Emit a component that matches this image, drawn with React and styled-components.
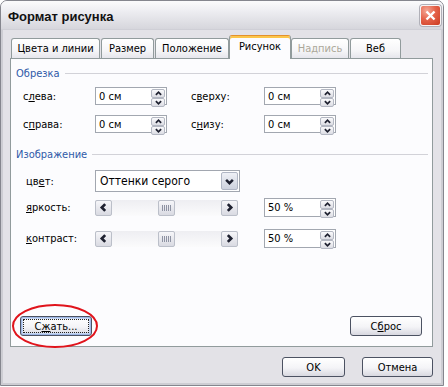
import React from "react";
import styled, { createGlobalStyle, css } from "styled-components";

const GlobalStyle = createGlobalStyle`
  html, body {
    margin: 0;
    padding: 0;
    background: #ffffff;
  }
  body {
    font-family: "DejaVu Sans Condensed", "Liberation Sans", sans-serif;
    font-size: 11px;
    color: #000;
  }
`;

function Chevron({ dir = "up", size = 7, weight = 1.8 }) {
    const pts = {
        up: "1,5.5 4,2.5 7,5.5",
        down: "1,2.5 4,5.5 7,2.5",
        left: "5.5,1 2.5,4 5.5,7",
        right: "2.5,1 5.5,4 2.5,7",
    }[dir];
    return (
        <svg width={size} height={size} viewBox="0 0 8 8">
            <polyline points={pts} fill="none" stroke="#1e2130" strokeWidth={weight} />
        </svg>
    );
}

function SpinControl({ value }) {
    return (
        <SpinBox>
            <SpinText>{value}</SpinText>
            <SpinButtons>
                <SpinButton>
                    <Chevron dir="up" size={7} weight={2} />
                </SpinButton>
                <SpinButton>
                    <Chevron dir="down" size={7} weight={2} />
                </SpinButton>
            </SpinButtons>
        </SpinBox>
    );
}

function ScrollBar() {
    return (
        <Scroll>
            <ScrollPart>
                <Chevron dir="left" size={9} weight={2.4} />
            </ScrollPart>
            <Track>
                <ScrollPart>
                    <Grip>
                        <i />
                        <i />
                        <i />
                        <i />
                        <i />
                    </Grip>
                </ScrollPart>
            </Track>
            <ScrollPart>
                <Chevron dir="right" size={9} weight={2.4} />
            </ScrollPart>
        </Scroll>
    );
}

function App() {
    return (
        <>
            <GlobalStyle />
            <Window>
                <TitleBar>
                    <Title>Формат рисунка</Title>
                    <CloseButton>
                        <svg width="11" height="11" viewBox="0 0 11 11">
                            <path d="M1.5 1.5 L9.5 9.5 M9.5 1.5 L1.5 9.5" stroke="#fff" strokeWidth="2.4" />
                        </svg>
                    </CloseButton>
                </TitleBar>
                <Body>
                    <TabStrip>
                        <Tab $w={89} $mr={1}>Цвета и линии</Tab>
                        <Tab $w={53} $mr={1}>Размер</Tab>
                        <Tab $w={74}>Положение</Tab>
                        <Tab $w={62} $active>Рисунок</Tab>
                        <Tab $w={58} $mr={1} $disabled>Надпись</Tab>
                        <Tab $w={51}>Веб</Tab>
                    </TabStrip>
                    <Panel>
                        <GroupHeader $top={7}>
                            <GroupLabel>Обрезка</GroupLabel>
                            <GroupLine />
                        </GroupHeader>
                        <Row $top={7} $h={18}>
                            <Label>с<u>л</u>ева:</Label>
                            <SpinControl value="0 см" />
                            <Label $gap={24} $w={73}>с<u>в</u>ерху:</Label>
                            <SpinControl value="0 см" />
                        </Row>
                        <Row $top={10} $h={18}>
                            <Label>с<u>п</u>рава:</Label>
                            <SpinControl value="0 см" />
                            <Label $gap={24} $w={73}>с<u>н</u>изу:</Label>
                            <SpinControl value="0 см" />
                        </Row>

                        <GroupHeader $top={14}>
                            <GroupLabel>Изображение</GroupLabel>
                            <GroupLine />
                        </GroupHeader>
                        <Row $top={9} $h={22}>
                            <Label $indent={3}>цв<u>е</u>т:</Label>
                            <Select>
                                <SelectText>Оттенки серого</SelectText>
                                <DropButton>
                                    <Chevron dir="down" size={9} weight={2.2} />
                                </DropButton>
                            </Select>
                        </Row>
                        <Row $top={6} $h={19}>
                            <Label $indent={3}><u>я</u>ркость:</Label>
                            <ScrollBar />
                            <Spacer $w={26} />
                            <SpinControl value="50 %" />
                        </Row>
                        <Row $top={12} $h={19}>
                            <Label $indent={3}><u>к</u>онтраст:</Label>
                            <ScrollBar />
                            <Spacer $w={26} />
                            <SpinControl value="50 %" />
                        </Row>

                        <PanelButtons>
                            <Button $w={72} $focus>
                                С<u>ж</u>ать...
                            </Button>
                            <Button $w={72}>
                                С<u>б</u>рос
                            </Button>
                        </PanelButtons>
                    </Panel>
                    <Footer>
                        <Button $w={63}>OK</Button>
                        <Button $w={71}>Отмена</Button>
                    </Footer>
                </Body>
                <Highlight width="92" height="48" viewBox="0 0 92 48">
                    <ellipse cx="44" cy="23" rx="42" ry="21" fill="none" stroke="#e0141c" strokeWidth="2" />
                </Highlight>
            </Window>
        </>
    );
}

// Styled Components

const Window = styled.div`
  position: relative;
  width: 444px;
  height: 386px;
  box-sizing: border-box;
  border: 1px solid #85868e;
  border-radius: 7px 7px 0 0;
  background: #e3e2e7;
  display: flex;
  flex-direction: column;
  overflow: hidden;
`;

const TitleBar = styled.div`
  height: 28px;
  flex: none;
  display: flex;
  align-items: center;
  justify-content: space-between;
  padding: 0 2px 0 7px;
  background: linear-gradient(#fbfbfc 0%, #eeeef2 35%, #e1e1e6 70%, #d6d6dc 100%);
  border-bottom: 1px solid #cfcfd6;
`;

const Title = styled.div`
  font-family: "Liberation Sans", "DejaVu Sans", sans-serif;
  font-weight: bold;
  font-size: 13px;
  color: #111;
  padding-top: 2px;
`;

const CloseButton = styled.div`
  width: 21px;
  height: 21px;
  box-sizing: border-box;
  border: 1px solid #f7f3f3;
  border-radius: 3px;
  box-shadow: 0 0 0 1px #b0b0b8;
  background: radial-gradient(circle at 30% 25%, #f4a896 0%, #e5634a 45%, #cb3a20 100%);
  display: flex;
  align-items: center;
  justify-content: center;
  margin-top: 1px;
`;

const Body = styled.div`
  flex: 1;
  display: flex;
  flex-direction: column;
  padding: 5px 10px 0 9px;
  box-shadow: inset 2px 0 0 #cdcdd3, inset -2px 0 0 #cdcdd3, inset 0 -2px 0 #cdcdd3;
`;

const TabStrip = styled.div`
  height: 23px;
  display: flex;
  align-items: flex-end;
  padding-left: 1px;
`;

const Tab = styled.div`
  width: ${(p) => p.$w}px;
  margin-right: ${(p) => p.$mr || 0}px;
  height: 20px;
  box-sizing: border-box;
  border: 1px solid #919b9c;
  border-bottom: none;
  border-radius: 3px 3px 0 0;
  background: linear-gradient(#ffffff 0%, #f6f6f8 60%, #e6e6ec 100%);
  color: ${(p) => (p.$disabled ? "#aca899" : "#000")};
  display: flex;
  justify-content: center;
  padding-top: 3px;
  ${(p) =>
        p.$active &&
        css`
      position: relative;
      z-index: 1;
      height: 24px;
      margin-bottom: -1px;
      padding-top: 4px;
      background: #fcfcfe;
      border-top: 1px solid #e3912d;
      box-shadow: inset 0 2px 0 #fcc64a;
    `}
`;

const Panel = styled.div`
  height: 289px;
  box-sizing: border-box;
  border: 1px solid #919b9c;
  background: #fcfcfe;
  display: flex;
  flex-direction: column;
  padding-bottom: 10px;
`;

const GroupHeader = styled.div`
  height: 14px;
  margin-top: ${(p) => p.$top}px;
  display: flex;
  align-items: center;
  padding: 0 4px 0 5px;
`;

const GroupLabel = styled.span`
  color: #2f5aa8;
`;

const GroupLine = styled.div`
  flex: 1;
  height: 1px;
  margin-left: 5px;
  background: #d2d2d8;
`;

const Row = styled.div`
  height: ${(p) => p.$h}px;
  margin-top: ${(p) => p.$top}px;
  display: flex;
  align-items: center;
  padding-left: 12px;
`;

const Label = styled.div`
  width: ${(p) => (p.$w || 72) - (p.$indent || 0)}px;
  margin-left: ${(p) => p.$gap || 0}px;
  padding-left: ${(p) => p.$indent || 0}px;
  white-space: nowrap;
`;

const Spacer = styled.div`
  width: ${(p) => p.$w}px;
  flex: none;
`;

const SpinBox = styled.div`
  width: 72px;
  height: 100%;
  box-sizing: border-box;
  border: 1px solid #a2a7b0;
  background: #fff;
  display: flex;
`;

const SpinText = styled.div`
  flex: 1;
  display: flex;
  align-items: center;
  padding-left: 3px;
`;

const SpinButtons = styled.div`
  width: 16px;
  box-sizing: border-box;
  padding: 1px;
  display: flex;
  flex-direction: column;
`;

const SpinButton = styled.div`
  flex: 1;
  border: 1px solid #b3b7c2;
  border-radius: 2px;
  background: linear-gradient(#fafafc, #dcdde4);
  display: flex;
  align-items: center;
  justify-content: center;
`;

const Select = styled.div`
  width: 145px;
  height: 22px;
  box-sizing: border-box;
  border: 1px solid #a2a7b0;
  background: #fff;
  display: flex;
  padding: 1px;
`;

const SelectText = styled.div`
  flex: 1;
  display: flex;
  align-items: center;
  padding-left: 3px;
  font-size: 12px;
`;

const DropButton = styled.div`
  width: 17px;
  box-sizing: border-box;
  border: 1px solid #b0b6c4;
  border-radius: 2px;
  background: linear-gradient(#eef0f6, #cdd2de);
  display: flex;
  align-items: center;
  justify-content: center;
`;

const Scroll = styled.div`
  width: 143px;
  height: 16px;
  display: flex;
  background: linear-gradient(#eeeef2, #fbfbfc);
`;

const ScrollPart = styled.div`
  width: 17px;
  height: 16px;
  box-sizing: border-box;
  border: 1px solid #bbbfc9;
  border-radius: 2px;
  background: linear-gradient(#f6f6f9, #d9dae2);
  display: flex;
  align-items: center;
  justify-content: center;
`;

const Track = styled.div`
  flex: 1;
  display: flex;
  justify-content: center;
`;

const Grip = styled.div`
  display: flex;
  gap: 1px;
  i {
    display: block;
    width: 1px;
    height: 6px;
    background: #8e93a3;
  }
`;

const PanelButtons = styled.div`
  margin-top: auto;
  display: flex;
  justify-content: space-between;
  padding: 0 10px 0 9px;
`;

const Footer = styled.div`
  display: flex;
  justify-content: flex-end;
  gap: 17px;
  margin-top: 10px;
`;

const Button = styled.button`
  position: relative;
  width: ${(p) => p.$w}px;
  height: 20px;
  box-sizing: border-box;
  padding: 0;
  border: 1px solid #4c5262;
  border-radius: 3px;
  background: linear-gradient(#ffffff 0%, #f4f4f7 55%, #d8d8e0 100%);
  font-family: inherit;
  font-size: 11px;
  color: #000;
  ${(p) =>
        p.$focus &&
        css`
      box-shadow: inset 0 0 0 1px #9fb8e6, inset 0 0 0 2px #c9d8f2;
      &::after {
        content: "";
        position: absolute;
        inset: 2px;
        border: 1px dotted #222;
      }
    `}
`;

const Highlight = styled.svg`
  position: absolute;
  left: 10px;
  top: 302px;
  pointer-events: none;
`;

export default App;
